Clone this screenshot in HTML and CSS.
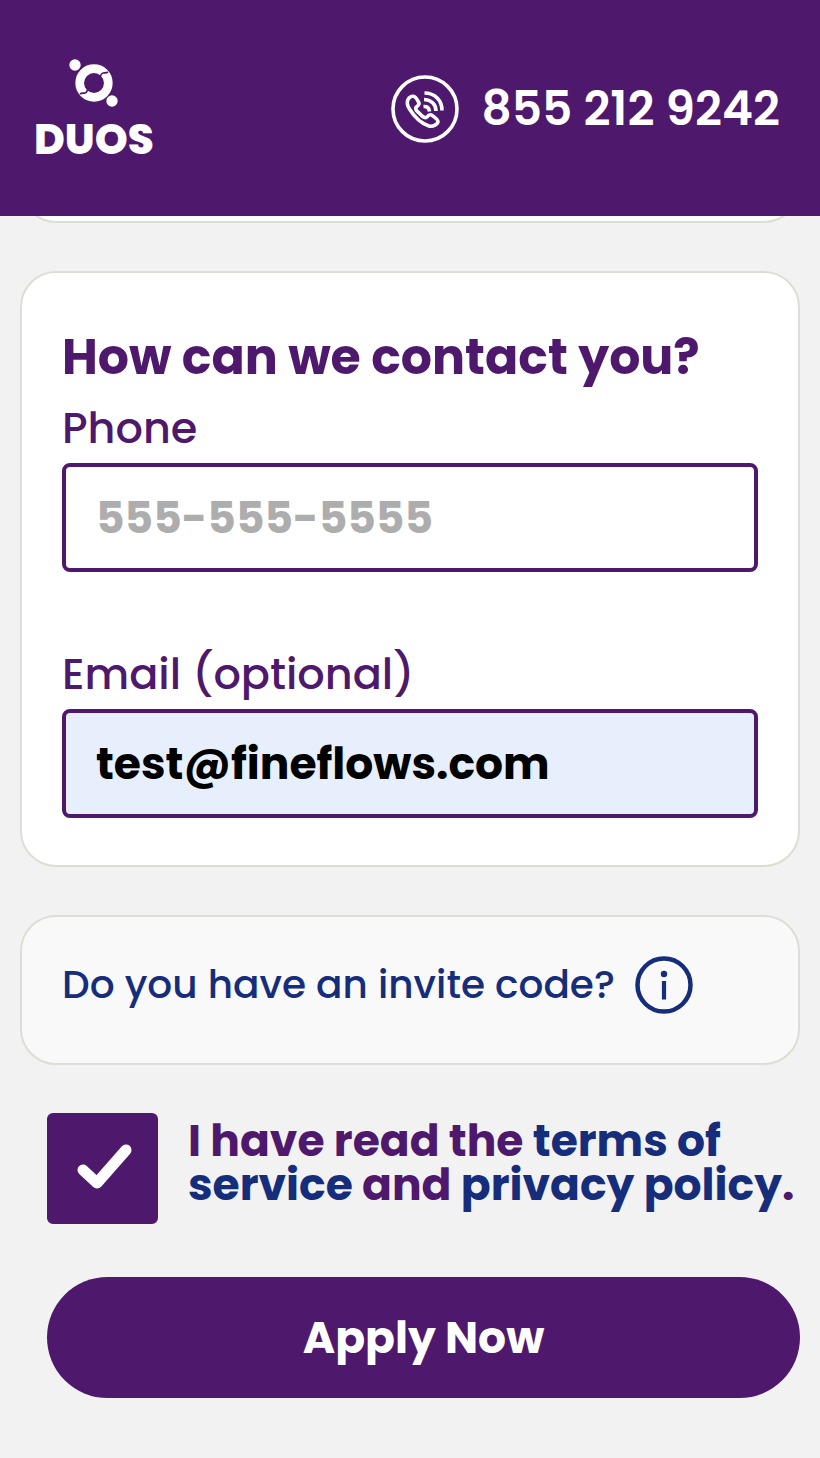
FILE: index.html
```html
<!DOCTYPE html>
<html lang="en">
<head>
<meta charset="utf-8">
<meta name="viewport" content="width=device-width, initial-scale=1">
<title>DUOS – Apply</title>
<link rel="stylesheet" href="styles.css">
</head>
<body>
<header class="site-header">
  <a class="logo" href="#" aria-label="DUOS home">
    <svg class="logo-mark" viewBox="0 0 50 50" aria-hidden="true">
      <circle class="mark-ring" cx="25" cy="25" r="14.300"/>
      <path class="mark-gap" d="M30.500 19C32 18.500 31.500 15.500 34 15C36 14.500 37 15.500 39 14M19.500 31C18 31.500 18.500 34.500 16 35C14 35.500 13 34.500 11 36"/>
      <circle class="mark-dot" cx="6" cy="7" r="5.700"/>
      <circle class="mark-dot" cx="43" cy="43" r="5.700"/>
    </svg>
    <span class="logo-text">DUOS</span>
  </a>
  <a class="call" href="tel:8552129242">
    <svg class="call-icon" viewBox="0 0 68 68" aria-hidden="true">
      <circle cx="34" cy="34" r="32" stroke-width="3.600"/>
      <path stroke-width="3.600" d="M17 24.500C15.300 28 16.500 31 18.500 34C23.500 42 30 48.500 38 51C42 52.200 47 49 47 46.500C47 44.500 44 42.500 41 40.300C39 39 37.500 40 36 42C35 43 33 42.500 31 41L25.500 35.500C24.500 34 24.500 32.500 26 31.500C28 30.200 28.500 28.500 27.300 26.500C25.800 24 24.500 21.500 22.500 21.300C20.500 21 18 22.700 17 24.500Z"/>
      <path stroke-width="3.600" d="M32.500 31.500Q38 31 38.500 36.500M33 24.500C40 24.500 45 29.500 45 36M33.500 18C44 18 51 25.500 51 35.500"/>
    </svg>
    <span>855 212 9242</span>
  </a>
</header>
<main class="page">
  <section class="card card-previous" aria-hidden="true"></section>
  <form class="form">
    <section class="card card-contact">
      <h2 class="card-title">How can we contact you?</h2>
      <div class="field">
        <label class="field-label" for="phone">Phone</label>
        <input class="field-input" id="phone" type="tel" placeholder="555-555-5555">
      </div>
      <div class="field">
        <label class="field-label" for="email">Email (optional)</label>
        <input class="field-input is-filled" id="email" type="email" value="test@fineflows.com">
      </div>
    </section>
    <section class="card card-invite">
      <a class="invite-link" href="#">Do you have an invite code?</a>
      <button class="info-button" type="button" aria-label="About invite codes">
        <svg viewBox="0 0 58 58" aria-hidden="true">
          <circle cx="29" cy="29" r="26.500" fill="none" stroke="currentColor" stroke-width="4.500"/>
          <circle cx="29" cy="18" r="3.200" fill="currentColor"/>
          <path d="M29 25V43.500" stroke="currentColor" stroke-width="4.200"/>
        </svg>
      </button>
    </section>
    <div class="actions">
      <div class="consent">
        <span class="check">
          <input class="check-input" id="terms" type="checkbox" checked>
          <svg class="check-mark" viewBox="0 0 111 111" aria-hidden="true"><path d="M36 57 50 70 79 37"/></svg>
        </span>
        <label class="consent-text" for="terms">I have read the <a href="#">terms of service</a> and <a href="#">privacy policy</a>.</label>
      </div>
      <button class="submit" type="submit">Apply Now</button>
    </div>
  </form>
</main>
</body>
</html>
```
FILE: styles.css
```css
* { box-sizing: border-box; }

body {
  margin: 0;
  background: #f2f2f2;
  color: #4e186d;
  font-family: Poppins, Inter, "Open Sans", sans-serif;
}

a { color: inherit; text-decoration: none; }

.site-header {
  position: sticky;
  top: 0;
  z-index: 1;
  display: flex;
  align-items: center;
  justify-content: space-between;
  height: 216px;
  padding: 2px 40px 0 34px;
  background: #4e186d;
  color: #fff;
}

.logo {
  display: flex;
  flex-direction: column;
  align-items: center;
  gap: 8px;
  padding-top: 4px;
}

.logo-mark { width: 50px; height: 50px; }
.mark-ring { fill: none; stroke: #fff; stroke-width: 8.7; }
.mark-gap { fill: none; stroke: #4e186d; stroke-width: 1.6; }
.mark-dot { fill: #fff; }
.logo-text { font-size: 42px; font-weight: 800; line-height: 48px; }

.call {
  display: flex;
  align-items: center;
  gap: 22px;
  font-size: 47px;
  font-weight: 600;
  line-height: 56px;
}

.call-icon {
  width: 68px;
  height: 68px;
  fill: none;
  stroke: #fff;
}

.page { padding: 0 20px 60px; }

.card {
  border: 2px solid #deddd5;
  border-radius: 36px;
  background: #fff;
}

.card-previous { height: 80px; margin: -73px 0 48px; }

.form {
  display: flex;
  flex-direction: column;
  gap: 48px;
}

.card-contact { padding: 52px 40px 47px; }

.card-title {
  margin: 0 0 11px;
  font-size: 49px;
  font-weight: 700;
  line-height: 64px;
}

.field + .field { margin-top: 74px; }

.field-label {
  display: block;
  margin-bottom: 7px;
  font-size: 43px;
  font-weight: 500;
  line-height: 56px;
}

.field-input {
  display: block;
  width: 100%;
  height: 109px;
  padding: 0 30px;
  border: 4px solid #4e186d;
  border-radius: 8px;
  background: #fff;
  color: #000;
  font: inherit;
  font-size: 44px;
  font-weight: 700;
}

.field-input::placeholder { color: #adadad; opacity: 1; }
.is-filled { background: #e8effc; }

.card-invite {
  display: flex;
  align-items: center;
  gap: 20px;
  padding: 39px 40px 49px;
  background: #f9f9f9;
  color: #152d7b;
}

.invite-link {
  font-size: 39px;
  font-weight: 500;
  line-height: 56px;
  white-space: nowrap;
}

.info-button {
  flex: none;
  width: 58px;
  height: 58px;
  padding: 0;
  border: 0;
  background: none;
  color: inherit;
}

.info-button svg { display: block; }

.actions { padding-left: 27px; }

.consent { display: flex; gap: 30px; }

.check { display: grid; flex: none; width: 111px; height: 111px; }
.check-input, .check-mark { grid-area: 1 / 1; width: 100%; height: 100%; }

.check-input {
  margin: 0;
  appearance: none;
  border: 4px solid #4e186d;
  border-radius: 6px;
  background: #fff;
}

.check-input:checked { background: #4e186d; }

.check-mark {
  pointer-events: none;
  fill: none;
  stroke: #fff;
  stroke-width: 11;
  stroke-linecap: round;
  stroke-linejoin: round;
}

.consent-text {
  margin-right: -20px;
  padding-top: 6px;
  font-size: 44px;
  font-weight: 700;
  line-height: 44px;
}

.consent-text a { color: #152d7b; }

.submit {
  display: block;
  width: 100%;
  height: 121px;
  margin-top: 53px;
  border: 0;
  border-radius: 61px;
  background: #4e186d;
  color: #fff;
  font: inherit;
  font-size: 44px;
  font-weight: 700;
}
```
